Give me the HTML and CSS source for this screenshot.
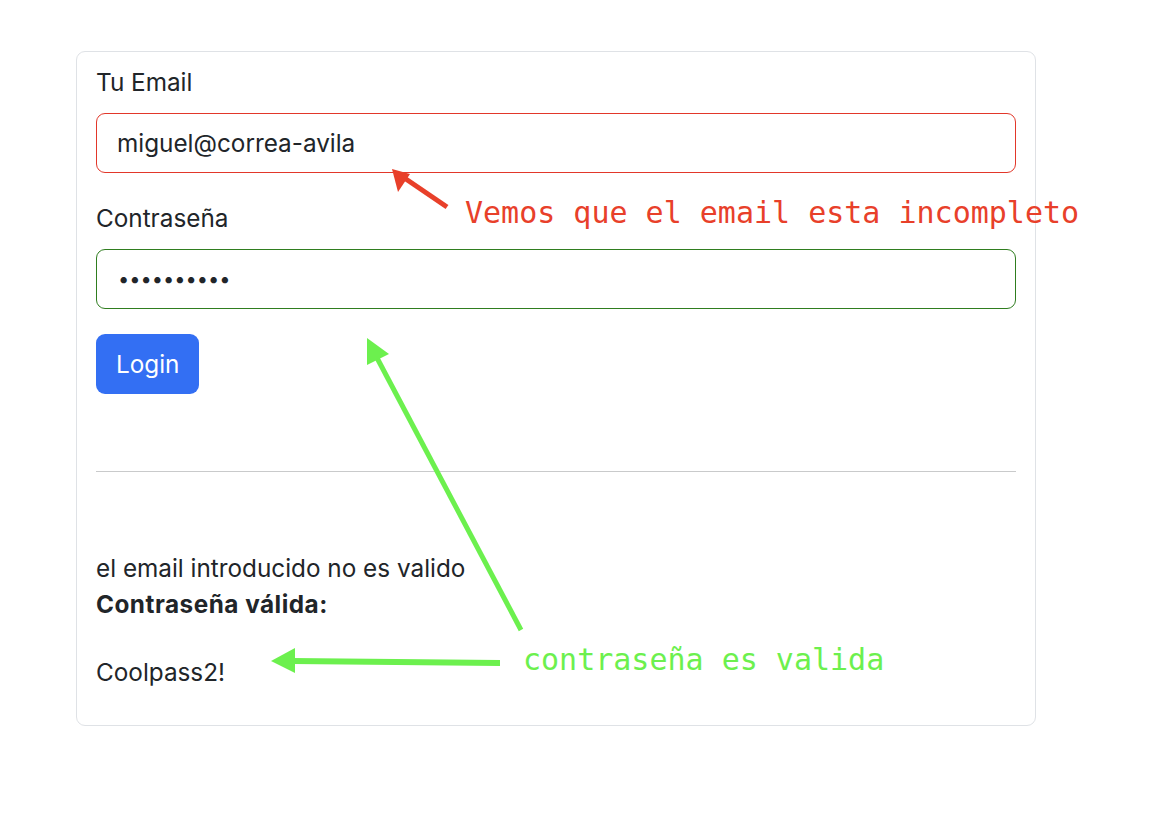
FILE: index.html
```html
<!DOCTYPE html>
<html lang="es">
<head>
<meta charset="utf-8">
<title>Login</title>
<link rel="stylesheet" href="styles.css">
</head>
<body>
<main class="page">
  <section class="card">
    <form class="login-form">
      <div class="field">
        <label class="field-label" for="email">Tu Email</label>
        <input class="field-input is-invalid" id="email" type="text" value="miguel@correa-avila">
      </div>
      <div class="field">
        <label class="field-label" for="pass">Contraseña</label>
        <input class="field-input is-valid" id="pass" type="password" value="Coolpass2!">
      </div>
      <button class="btn-login" type="button">Login</button>
    </form>
    <hr class="divider">
    <div class="results">
      <div class="result-line">el email introducido no es valido</div>
      <div class="result-line result-title">Contraseña válida:</div>
      <p class="result-value">Coolpass2!</p>
    </div>
  </section>

  <svg class="annot-layer" width="1160" height="818" viewBox="0 0 1160 818" aria-hidden="true">
    <g class="red-arrow">
      <line x1="447" y1="207" x2="400" y2="175" stroke="#e8402a" stroke-width="5"/>
      <polygon points="392,169 398,192 410,174" fill="#e8402a"/>
    </g>
    <g class="green-arrow">
      <line x1="521" y1="630" x2="376" y2="356" stroke="#6cf04e" stroke-width="5"/>
      <polygon points="367,338 367,365 389,354" fill="#6cf04e"/>
      <line x1="500" y1="663" x2="292" y2="661" stroke="#6cf04e" stroke-width="6"/>
      <polygon points="271,661 295,648 295,673" fill="#6cf04e"/>
    </g>
  </svg>
  <div class="note note-red">Vemos que el email esta incompleto</div>
  <div class="note note-green">contraseña es valida</div>
</main>
</body>
</html>
```

FILE: styles.css
```css
* { box-sizing: border-box; }

html, body {
  margin: 0;
  padding: 0;
  background: #ffffff;
}

body {
  font-family: "Inter", "Liberation Sans", Arial, sans-serif;
  color: #212529;
  font-size: 24.3px;
  line-height: 36px;
}

.page {
  position: relative;
  width: 1160px;
  height: 818px;
  padding: 51px 0 0 76px;
}

.card {
  width: 960px;
  border: 1px solid #dfe2e6;
  border-radius: 9px;
  padding: 12px 19px 19px 19px;
}

.login-form {
  display: flex;
  flex-direction: column;
  align-items: flex-start;
}

.field {
  width: 100%;
  display: flex;
  flex-direction: column;
  margin-bottom: 27px;
}

.field-label {
  display: block;
  margin-bottom: 13px;
}

.field-input {
  width: 920px;
  height: 60px;
  border-radius: 9px;
  padding: 0 20px;
  font-family: inherit;
  font-size: 24.3px;
  color: #212529;
  background: #fff;
  outline: none;
}

.field-input.is-invalid { border: 1px solid #e2372a; }
.field-input.is-valid {
  border: 1px solid #2f7d1f;
  font-size: 20px;
  padding-left: 21px;
}

.btn-login {
  margin-top: -2px;
  height: 60px;
  padding: 0 20px;
  border: none;
  border-radius: 9px;
  background: #336ff3;
  color: #ffffff;
  font-family: inherit;
  font-size: 24.3px;
}

.divider {
  margin: 77px 0 0 0;
  border: 0;
  border-top: 1px solid #c9cacb;
}

.results {
  padding-top: 78px;
}

.result-line { line-height: 36px; }
.result-title { font-weight: 700; letter-spacing: 0.5px; }

.result-value {
  margin: 32px 0 16px 0;
}

.annot-layer {
  position: absolute;
  left: 0;
  top: 0;
  pointer-events: none;
}

.note {
  position: absolute;
  font-family: "DejaVu Sans Mono", monospace;
  font-size: 30px;
  line-height: 30px;
  white-space: nowrap;
}

.note-red { left: 465px; top: 198px; color: #e8402a; }
.note-green { left: 523px; top: 645px; color: #6cf04e; }
```
